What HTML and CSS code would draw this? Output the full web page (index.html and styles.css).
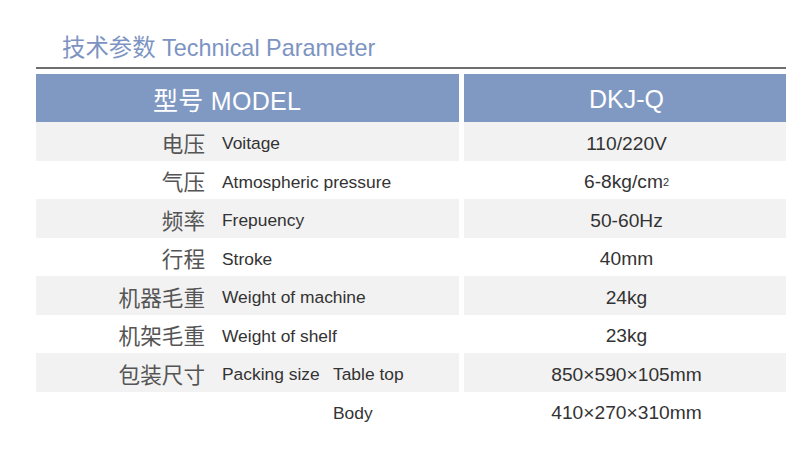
FILE: index.html
```html
<!DOCTYPE html>
<html lang="zh">
<head>
<meta charset="utf-8">
<title>技术参数 Technical Parameter</title>
<link rel="stylesheet" href="styles.css">
</head>
<body>
<div class="page">
  <h1 class="title">技术参数 Technical Parameter</h1>
  <div class="rule"></div>
  <div class="table">
    <div class="row head">
      <div class="cell left"><span class="head-text">型号 MODEL</span></div>
      <div class="cell right">DKJ-Q</div>
    </div>
    <div class="row shade">
      <div class="cell left"><span class="zh">电压</span><span class="en">Voitage</span></div>
      <div class="cell right">110/220V</div>
    </div>
    <div class="row">
      <div class="cell left"><span class="zh">气压</span><span class="en">Atmospheric pressure</span></div>
      <div class="cell right">6-8kg/cm<sup>2</sup></div>
    </div>
    <div class="row shade">
      <div class="cell left"><span class="zh">频率</span><span class="en">Frepuency</span></div>
      <div class="cell right">50-60Hz</div>
    </div>
    <div class="row">
      <div class="cell left"><span class="zh">行程</span><span class="en">Stroke</span></div>
      <div class="cell right">40mm</div>
    </div>
    <div class="row shade">
      <div class="cell left"><span class="zh">机器毛重</span><span class="en">Weight of machine</span></div>
      <div class="cell right">24kg</div>
    </div>
    <div class="row">
      <div class="cell left"><span class="zh">机架毛重</span><span class="en">Weight of shelf</span></div>
      <div class="cell right">23kg</div>
    </div>
    <div class="row shade">
      <div class="cell left"><span class="zh">包装尺寸</span><span class="en en-short">Packing size</span><span class="en">Table top</span></div>
      <div class="cell right">850×590×105mm</div>
    </div>
    <div class="row">
      <div class="cell left"><span class="zh"></span><span class="en en-short"></span><span class="en">Body</span></div>
      <div class="cell right">410×270×310mm</div>
    </div>
  </div>
</div>
</body>
</html>
```
FILE: styles.css
```css
* { box-sizing: border-box; }
html, body { margin: 0; padding: 0; background: #ffffff; }
body {
  font-family: "Liberation Sans", Arial, "Noto Sans CJK SC", sans-serif;
  color: #333333;
}
.page {
  width: 750px;
  margin-left: 36px;
  padding-top: 34px;
}
.title {
  margin: 0 0 5px 26px;
  font-weight: normal;
  font-size: 23.4px;
  line-height: 28px;
  color: #7d94c2;
}
.rule {
  height: 2px;
  background: #6e6e6e;
  margin-bottom: 5px;
}
.table {
  display: flex;
  flex-direction: column;
}
.row {
  display: grid;
  grid-template-columns: 423px 322px;
  column-gap: 5px;
  height: 38.5px;
}
.row.head { height: 48px; }
.cell {
  display: flex;
  align-items: center;
  padding-top: 5px;
}
.row.shade .cell { background: #f2f2f2; }
.row.head .cell {
  background: #8099c3;
  color: #ffffff;
  padding-top: 2px;
}
.head-text {
  padding-left: 117px;
  font-size: 25px;
  letter-spacing: 0.3px;
}
.row.head .right {
  font-size: 25px;
}
.right {
  justify-content: center;
  font-size: 19.2px;
  padding-left: 3px;
}
.zh {
  width: 169px;
  text-align: right;
  font-size: 21.6px;
  color: #555555;
  font-family: "Noto Sans CJK SC", sans-serif;
  flex: none;
  margin-top: -3px;
}
.en {
  margin-left: 17px;
  font-size: 17.4px;
  color: #333333;
}
.en-short { width: 100px; flex: none; margin-right: -6px; }
sup {
  font-size: 11px;
  vertical-align: 8px;
  line-height: 0;
}
```
